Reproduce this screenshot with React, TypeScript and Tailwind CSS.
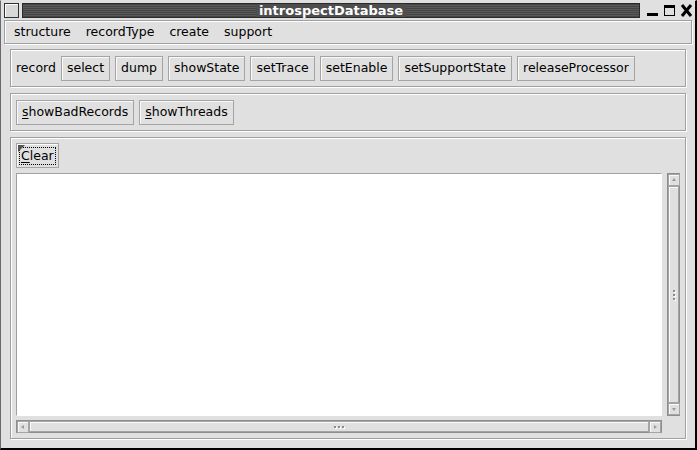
import React from 'react';

const raised =
  'border border-[#a4a4a4] shadow-[inset_1px_1px_0_#fafafa]';
const groove =
  'border border-[#a0a0a0] shadow-[inset_1px_1px_0_#ffffff,1px_1px_0_#ffffff]';

function Btn({ children, className = '' }: { children: React.ReactNode; className?: string }) {
  return (
    <div className={`h-[25px] flex items-center px-[5px] bg-[#e0e0e0] ${raised} ${className}`}>
      {children}
    </div>
  );
}

function Arrow({ dir }: { dir: 'up' | 'down' | 'left' | 'right' }) {
  const pts = {
    up: '2,5 4,2 6,5',
    down: '2,3 4,6 6,3',
    left: '5,2 2,4 5,6',
    right: '3,2 6,4 3,6',
  }[dir];
  return (
    <div className={`w-[12px] h-[12px] flex items-center justify-center bg-[#e0e0e0] ${raised}`}>
      <svg width="8" height="8" viewBox="0 0 8 8">
        <polygon points={pts} fill="#9a9a9a" />
      </svg>
    </div>
  );
}

function Grip({ vertical }: { vertical: boolean }) {
  return (
    <div className={`flex ${vertical ? 'flex-col' : 'flex-row'} gap-[2px]`}>
      {[0, 1, 2].map((i) => (
        <div key={i} className="w-[2px] h-[2px] bg-[#8c8c8c] shadow-[1px_1px_0_#ffffff]" />
      ))}
    </div>
  );
}

export default function App() {
  return (
    <div
      className="w-[697px] h-[450px] bg-[#e0e0e0] flex flex-col border-l border-t border-l-[#6a6a6a] border-t-[#e0e0e0] border-r-2 border-b-2 border-r-black border-b-black text-[12.5px] text-black"
      style={{ fontFamily: '"DejaVu Sans", sans-serif' }}
    >
      {/* Title bar */}
      <div className="h-[19px] flex items-center pl-[3px] pr-[2px] gap-[3px]">
        <div className="w-[15px] h-[15px] border border-[#303030] bg-[#d8d8d8] shadow-[inset_1px_1px_0_#ffffff]" />
        <div className="flex-1 h-[15px] border border-[#2a2a2a] flex items-center justify-center bg-[repeating-linear-gradient(180deg,#444444_0px,#444444_1px,#5a5a5a_1px,#5a5a5a_2px)]">
          <span className="text-white font-bold text-[13px] leading-[13px] px-[3px] bg-[#4e4e4e]">
            introspectDatabase
          </span>
        </div>
        <div className="flex items-center gap-[4px] ml-[3px]">
          <svg width="13" height="13" viewBox="0 0 13 13">
            <rect x="1" y="9" width="11" height="3" fill="#000" />
          </svg>
          <svg width="13" height="13" viewBox="0 0 13 13">
            <rect x="1.5" y="1.5" width="10" height="10" fill="none" stroke="#000" strokeWidth="1" />
            <rect x="1" y="1" width="11" height="3" fill="#000" />
          </svg>
          <svg width="13" height="13" viewBox="0 0 13 13">
            <path d="M2 1 L11 12 M11 1 L2 12" stroke="#000" strokeWidth="3" />
          </svg>
        </div>
      </div>

      {/* Menu bar */}
      <div className={`mx-[3px] h-[24px] flex items-center gap-[15px] pl-[9px] ${groove}`}>
        <span>structure</span>
        <span>recordType</span>
        <span>create</span>
        <span>support</span>
      </div>

      {/* Content */}
      <div className="flex-1 flex flex-col gap-[6px] px-[9px] pt-[5px] pb-[9px]">
        <div className={`h-[38px] flex items-center gap-[5px] pl-[5px] ${groove}`}>
          <span>record</span>
          <Btn>select</Btn>
          <Btn>dump</Btn>
          <Btn>showState</Btn>
          <Btn>setTrace</Btn>
          <Btn>setEnable</Btn>
          <Btn>setSupportState</Btn>
          <Btn>releaseProcessor</Btn>
        </div>

        <div className={`h-[38px] flex items-center gap-[5px] pl-[5px] ${groove}`}>
          <Btn>
            <span className="underline underline-offset-2">s</span>howBadRecords
          </Btn>
          <Btn>
            <span className="underline underline-offset-2">s</span>howThreads
          </Btn>
        </div>

        <div className={`flex-1 flex flex-col p-[5px] gap-[5px] ${groove}`}>
          <div className="flex">
            <div className={`relative h-[25px] flex items-center px-[2px] bg-[#e0e0e0] ${raised}`}>
              <div className="absolute left-[1px] top-[1px] w-0 h-0 border-t-[7px] border-r-[7px] border-t-[#555555] border-r-transparent" />
              <span className="border border-dotted border-black px-[1px] leading-[16px]">
                <span className="underline underline-offset-2">C</span>lear
              </span>
            </div>
          </div>

          <div className="flex-1 grid grid-cols-[1fr_13px] grid-rows-[1fr_13px] gap-x-[5px] gap-y-[4px]">
            <div className="bg-white border border-t-[#a0a0a0] border-l-[#a0a0a0] border-r-white border-b-white" />

            <div className="flex flex-col border border-[#8e8e8e] bg-[#e0e0e0]">
              <Arrow dir="up" />
              <div className={`flex-1 flex items-center justify-center ${raised}`}>
                <Grip vertical />
              </div>
              <Arrow dir="down" />
            </div>

            <div className="flex flex-row border border-[#8e8e8e] bg-[#e0e0e0]">
              <Arrow dir="left" />
              <div className={`flex-1 flex items-center justify-center ${raised}`}>
                <Grip vertical={false} />
              </div>
              <Arrow dir="right" />
            </div>
            <div />
          </div>
        </div>
      </div>
    </div>
  );
}
